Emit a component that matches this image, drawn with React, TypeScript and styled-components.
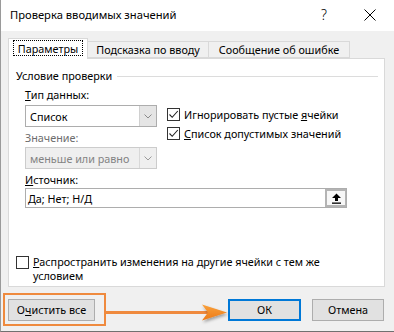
import React from 'react';
import styled, { createGlobalStyle } from 'styled-components';

const Global = createGlobalStyle`
  html, body { margin: 0; padding: 0; }
  body {
    font-family: "Noto Sans", "Open Sans", sans-serif;
    font-size: 10.8px;
    color: #000;
    background: #f0f0f0;
  }
  #root { width: 394px; height: 332px; }
`;

const Window = styled.div`
  position: relative;
  width: 394px;
  height: 332px;
  box-sizing: border-box;
  border-left: 1px solid #9a9a9a;
  border-bottom: 1px solid #707070;
  background: #f0f0f0;
  display: flex;
  flex-direction: column;
  overflow: hidden;
`;

const TitleBar = styled.div`
  height: 31px;
  flex: none;
  background: #fff;
  display: flex;
  align-items: center;
  padding-left: 9px;
`;

const Title = styled.div`
  flex: 1;
  font-size: 11.2px;
  line-height: 16px;
  padding-bottom: 1px;
`;

const HelpGlyph = styled.div`
  width: 12px;
  font-size: 14px;
  font-weight: 300;
  line-height: 16px;
  text-align: center;
  margin-right: 34px;
  padding-bottom: 2px;
`;

const CloseIcon = styled.svg`
  width: 12px;
  height: 12px;
  margin-right: 18px;
  margin-bottom: 1px;
`;

const Body = styled.div`
  padding: 7px 9px 0 7px;
  display: flex;
  flex-direction: column;
`;

const TabRow = styled.div`
  display: flex;
  align-items: flex-end;
  height: 20px;
  position: relative;
  z-index: 1;
`;

const Tab = styled.div<{ $active?: boolean; $w: number }>`
  width: ${p => p.$w}px;
  height: ${p => (p.$active ? 21 : 17)}px;
  box-sizing: border-box;
  border: 1px solid #d9d9d9;
  border-bottom: ${p => (p.$active ? 'none' : '1px solid #d9d9d9')};
  border-left: ${p => (p.$active ? '1px solid #d9d9d9' : 'none')};
  background: ${p => (p.$active ? '#fff' : '#f0f0f0')};
  margin-bottom: ${p => (p.$active ? -1 : 0)}px;
  display: flex;
  align-items: center;
  justify-content: center;
  padding-top: ${p => (p.$active ? 0 : 1)}px;
  padding-bottom: ${p => (p.$active ? 2 : 0)}px;
  white-space: nowrap;
  line-height: 16px;
`;

const FocusRing = styled.span`
  border: 1px dotted #000;
  padding: 0 4px;
  line-height: 13px;
  height: 14px;
  display: inline-flex;
  align-items: center;
`;

const Panel = styled.div`
  height: 229px;
  box-sizing: border-box;
  background: #fff;
  border: 1px solid #d9d9d9;
  padding: 9px 6px 3px 7px;
  display: flex;
  flex-direction: column;
`;

const GroupTitle = styled.div`
  display: flex;
  align-items: center;
  gap: 5px;
  height: 16px;
  line-height: 16px;
`;

const GroupLine = styled.div`
  flex: 1;
  height: 1px;
  background: #dcdcdc;
`;

const Group = styled.div`
  padding-left: 9px;
  margin-top: 3px;
`;

const Columns = styled.div`
  display: flex;
  gap: 10px;
`;

const LeftCol = styled.div`
  width: 132px;
  display: flex;
  flex-direction: column;
`;

const RightCol = styled.div`
  padding-top: 18px;
  display: flex;
  flex-direction: column;
`;

const FieldLabel = styled.div<{ $disabled?: boolean; $gap?: number }>`
  height: 16px;
  line-height: 16px;
  margin-top: ${p => p.$gap ?? 0}px;
  color: ${p => (p.$disabled ? '#6d6d6d' : '#000')};
  white-space: nowrap;
`;

const Combo = styled.div<{ $disabled?: boolean; $gap?: number }>`
  height: 22px;
  box-sizing: border-box;
  margin-top: ${p => p.$gap ?? 0}px;
  border: 1px solid ${p => (p.$disabled ? '#cccccc' : '#adadad')};
  background: ${p => (p.$disabled ? '#efefef' : '#fff')};
  color: ${p => (p.$disabled ? '#838383' : '#000')};
  display: flex;
  align-items: stretch;
`;

const ComboText = styled.div`
  flex: 1;
  padding-left: 4px;
  display: flex;
  align-items: center;
  white-space: nowrap;
  overflow: hidden;
`;

const ComboButton = styled.div<{ $disabled?: boolean }>`
  width: 16px;
  border-left: 1px solid ${p => (p.$disabled ? '#d8d8d8' : '#d0d0d0')};
  background: ${p => (p.$disabled ? '#efefef' : '#e5e5e5')};
  display: flex;
  align-items: center;
  justify-content: center;
`;

const CheckRow = styled.label<{ $align?: string }>`
  display: flex;
  align-items: ${p => p.$align ?? 'center'};
  gap: 4px;
  min-height: 19px;
  white-space: nowrap;
`;

const Box = styled.span<{ $top?: number }>`
  width: 13px;
  height: 13px;
  flex: none;
  box-sizing: border-box;
  border: 1px solid #333;
  background: #fff;
  display: flex;
  align-items: center;
  justify-content: center;
  margin-top: ${p => p.$top ?? 0}px;
`;

const WrapText = styled.span`
  line-height: 14px;
  white-space: normal;
`;

const SourceInput = styled.div`
  width: 322px;
  height: 20px;
  box-sizing: border-box;
  border: 1px solid #adadad;
  background: #fff;
  display: flex;
  align-items: stretch;
`;

const SourceText = styled.div`
  flex: 1;
  padding-left: 2px;
  display: flex;
  align-items: center;
  white-space: nowrap;
`;

const PickButton = styled.div`
  width: 21px;
  box-sizing: border-box;
  border: 2px solid #b4b4b4;
  border-right-width: 1px;
  background: #f7f7f7;
  display: flex;
  align-items: center;
  justify-content: center;
`;

const Spread = styled.div`
  margin-top: auto;
`;

const Footer = styled.div`
  padding: 12px 10px 0 7px;
  display: flex;
  align-items: center;
`;

const Button = styled.div<{ $w: number; $default?: boolean }>`
  width: ${p => p.$w}px;
  height: 22px;
  box-sizing: border-box;
  border: ${p => (p.$default ? '2px solid #0078d7' : '1px solid #adadad')};
  background: #e1e1e1;
  display: flex;
  align-items: center;
  justify-content: center;
  white-space: nowrap;
  line-height: 16px;
`;

const Spacer = styled.div`
  flex: 1;
`;

const ButtonGap = styled.div`
  width: 11px;
`;

const Annotation = styled.svg`
  position: absolute;
  left: -1px;
  top: 0;
  width: 394px;
  height: 332px;
  pointer-events: none;
`;

const Chevron = ({ color }: { color: string }) => (
  <svg width="8" height="5" viewBox="0 0 8 5">
    <path d="M0.5 0.5 L4 4 L7.5 0.5" fill="none" stroke={color} strokeWidth="1" />
  </svg>
);

const Check = () => (
  <svg width="11" height="11" viewBox="0 0 11 11">
    <path d="M1.5 5.5 L4.2 8.3 L9.8 2" fill="none" stroke="#222" strokeWidth="1.1" />
  </svg>
);

export default function App() {
  return (
    <>
      <Global />
      <Window>
        <TitleBar>
          <Title>Проверка вводимых значений</Title>
          <HelpGlyph>?</HelpGlyph>
          <CloseIcon viewBox="0 0 12 12">
            <path d="M0.5 0.5 L11.5 11.5 M11.5 0.5 L0.5 11.5" stroke="#000" strokeWidth="1" />
          </CloseIcon>
        </TitleBar>
        <Body>
          <TabRow>
            <Tab $active $w={80}>
              <FocusRing>Параметры</FocusRing>
            </Tab>
            <Tab $w={121}>Подсказка по вводу</Tab>
            <Tab $w={141}>Сообщение об ошибке</Tab>
          </TabRow>
          <Panel>
            <GroupTitle>
              <span>Условие проверки</span>
              <GroupLine />
            </GroupTitle>
            <Group>
              <Columns>
                <LeftCol>
                  <FieldLabel>
                    <u>Т</u>ип данных:
                  </FieldLabel>
                  <Combo $gap={2}>
                    <ComboText>Список</ComboText>
                    <ComboButton>
                      <Chevron color="#8a8a8a" />
                    </ComboButton>
                  </Combo>
                  <FieldLabel $disabled $gap={3}>
                    Значение:
                  </FieldLabel>
                  <Combo $disabled $gap={1}>
                    <ComboText>меньше или равно</ComboText>
                    <ComboButton $disabled>
                      <Chevron color="#9a9a9a" />
                    </ComboButton>
                  </Combo>
                </LeftCol>
                <RightCol>
                  <CheckRow>
                    <Box>
                      <Check />
                    </Box>
                    <span>
                      Игнорировать пустые <u>я</u>чейки
                    </span>
                  </CheckRow>
                  <CheckRow>
                    <Box>
                      <Check />
                    </Box>
                    <span>
                      <u>С</u>писок допустимых значений
                    </span>
                  </CheckRow>
                </RightCol>
              </Columns>
              <FieldLabel $gap={3}>
                <u>И</u>сточник:
              </FieldLabel>
              <SourceInput>
                <SourceText>Да; Нет; Н/Д</SourceText>
                <PickButton>
                  <svg width="11" height="11" viewBox="0 0 11 11">
                    <path d="M5.5 0.5 L10 5 L7 5 L7 8 L4 8 L4 5 L1 5 Z" fill="#000" />
                    <rect x="1" y="9.5" width="9" height="1.3" fill="#000" />
                  </svg>
                </PickButton>
              </SourceInput>
            </Group>
            <Spread>
              <CheckRow $align="flex-start">
                <Box $top={1} />
                <WrapText>
                  <u>Р</u>аспространить изменения на другие ячейки с тем же
                  <br />
                  условием
                </WrapText>
              </CheckRow>
            </Spread>
          </Panel>
        </Body>
        <Footer>
          <Button $w={87}>
            О<u>ч</u>истить все
          </Button>
          <Spacer />
          <Button $w={73} $default>
            ОК
          </Button>
          <ButtonGap />
          <Button $w={72}>Отмена</Button>
        </Footer>
        <Annotation viewBox="0 0 394 332">
          <defs>
            <filter id="sh" x="-20%" y="-40%" width="160%" height="200%">
              <feDropShadow dx="1" dy="2" stdDeviation="1.5" floodColor="#000" floodOpacity="0.35" />
            </filter>
            <linearGradient id="ah" x1="0" y1="0" x2="0" y2="1">
              <stop offset="0" stopColor="#f9a13c" />
              <stop offset="1" stopColor="#ec7a16" />
            </linearGradient>
          </defs>
          <rect x="4" y="294" width="101" height="31" fill="none" stroke="#ef8a3e" strokeWidth="2" />
          <rect x="106" y="311" width="102" height="3" fill="#ef8a3e" />
          <path d="M202 304.5 L227 312.5 L202 320.5 L208 312.5 Z" fill="url(#ah)" filter="url(#sh)" />
        </Annotation>
      </Window>
    </>
  );
}
